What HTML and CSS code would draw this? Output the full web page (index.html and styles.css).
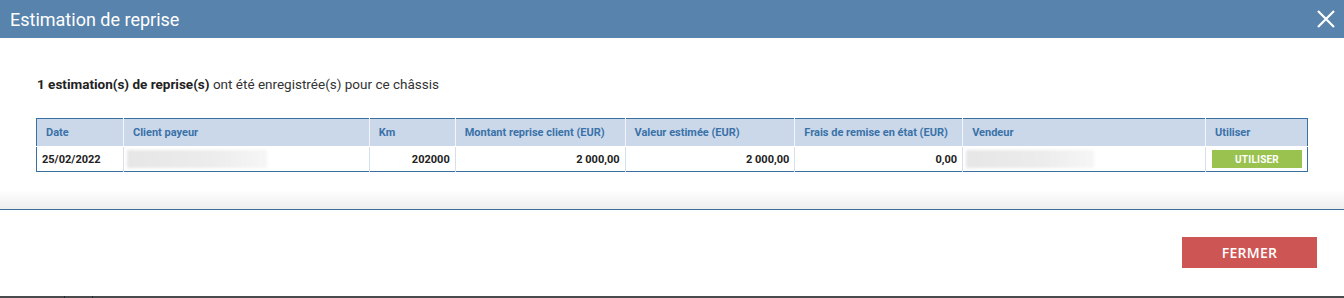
FILE: index.html
```html
<!DOCTYPE html>
<html lang="fr">

<head>
  <meta charset="UTF-8">
  <meta name="viewport" content="width=device-width, initial-scale=1.0">
  <title>Estimation de reprise</title>
  <link rel="stylesheet" href="styles.css">
</head>

<body>
  <div class="modal">
    <div class="modal-header">
      <h2>Estimation de reprise</h2>
      <button class="close" type="button" aria-label="Fermer">
        <svg width="18" height="18" viewBox="0 0 18 18">
          <path d="M1 1 L17 17 M17 1 L1 17" stroke="#fff" stroke-width="2.2" fill="none" />
        </svg>
      </button>
    </div>

    <div class="modal-body">
      <p class="intro"><b>1 estimation(s) de reprise(s)</b> ont été enregistrée(s) pour ce châssis</p>

      <table id="reprise-table">
        <thead>
          <tr>
            <th class="c-date">Date</th>
            <th class="c-client">Client payeur</th>
            <th class="c-km">Km</th>
            <th class="c-montant">Montant reprise client (EUR)</th>
            <th class="c-valeur">Valeur estimée (EUR)</th>
            <th class="c-frais">Frais de remise en état (EUR)</th>
            <th class="c-vendeur">Vendeur</th>
            <th class="c-use">Utiliser</th>
          </tr>
        </thead>
        <tbody>
          <tr>
            <td>25/02/2022</td>
            <td><div class="blurred blur-client"></div></td>
            <td class="num">202000</td>
            <td class="num">2 000,00</td>
            <td class="num">2 000,00</td>
            <td class="num">0,00</td>
            <td><div class="blurred blur-vendeur"></div></td>
            <td><button class="btn-use" type="button">UTILISER</button></td>
          </tr>
        </tbody>
      </table>
    </div>

    <div class="modal-footer">
      <button class="btn-close" type="button">FERMER</button>
    </div>
  </div>

  <div class="taskbar">
    <span class="sep"></span>
    <span class="sep"></span>
  </div>
</body>

</html>
```

FILE: styles.css
```css
html, body {
  margin: 0;
  padding: 0;
  height: 298px;
  overflow: hidden;
  background-color: #fff;
  font-family: 'Roboto', 'Liberation Sans', sans-serif;
}

.modal {
  display: flex;
  flex-direction: column;
  height: 296px;
}

.modal-header {
  height: 38px;
  flex-shrink: 0;
  background-color: #5783ac;
  display: flex;
  align-items: center;
  justify-content: space-between;
  padding: 0 9px 0 10px;
}

.modal-header h2 {
  margin: 0;
  color: #fff;
  font-size: 18px;
  font-weight: normal;
}

.close {
  background: none;
  border: 0;
  padding: 0;
  width: 18px;
  height: 18px;
  cursor: pointer;
}

.close svg {
  display: block;
}

.modal-body {
  padding: 0 36px;
  height: 171px;
  flex-shrink: 0;
}

.intro {
  margin: 38px 0 0 1px;
  font-size: 13.5px;
  line-height: 16px;
  color: #333;
}

.intro b {
  font-weight: bold;
  color: #222;
}

#reprise-table {
  width: 100%;
  margin-top: 26px;
  border-collapse: collapse;
  border: 1px solid #3a70a0;
  font-size: 11px;
}

#reprise-table th {
  height: 27px;
  padding: 0 9px;
  text-align: left;
  font-weight: bold;
  color: #3a72a8;
  background-color: #cbd8ea;
  border-left: 1px solid #f2f5fa;
  border-bottom: 1px solid #fff;
}

#reprise-table td {
  height: 24px;
  padding: 0 5px;
  font-weight: bold;
  color: #222;
  border-left: 1px solid #d6dfea;
}

#reprise-table th:first-child,
#reprise-table td:first-child {
  border-left: 0;
}

#reprise-table td.num {
  text-align: right;
}

.c-date { width: 68px; }
.c-client { width: 227px; }
.c-km { width: 67px; }
.c-montant { width: 151px; }
.c-valeur { width: 151px; }
.c-frais { width: 149px; }
.c-vendeur { width: 224px; }

.blurred {
  height: 18px;
  background: linear-gradient(to right, #e6e6e6, #ececec 60%, #f6f6f6);
  filter: blur(1.5px);
}

.blur-client { width: 140px; margin-left: -2px; }
.blur-vendeur { width: 128px; margin-left: -2px; }

.btn-use {
  display: block;
  width: 90px;
  height: 18px;
  margin-left: 1px;
  border: 0;
  padding: 0;
  background-color: #99c24e;
  color: #fff;
  font-family: 'Roboto', 'Liberation Sans', sans-serif;
  font-size: 10px;
  font-weight: bold;
  letter-spacing: 0.2px;
}

.modal-footer {
  flex: 1;
  border-top: 1px solid #3a6f9c;
  position: relative;
  display: flex;
  justify-content: flex-end;
  align-items: flex-start;
  padding: 27px 27px 0 0;
}

.modal-footer::before {
  content: '';
  position: absolute;
  left: 0;
  right: 0;
  top: -20px;
  height: 19px;
  background: linear-gradient(to bottom, rgba(240, 240, 240, 0), #eeeeee);
}

.btn-close {
  width: 135px;
  height: 31px;
  border: 0;
  background-color: #cd5554;
  color: #fff;
  font-family: 'Open Sans', 'Roboto', sans-serif;
  font-size: 14px;
  font-weight: 600;
  letter-spacing: 0.3px;
}

.taskbar {
  height: 2px;
  background-color: #4a4b4d;
  display: flex;
  padding-left: 64px;
  gap: 27px;
}

.taskbar .sep {
  width: 1px;
  background-color: #1f2d3a;
}
```
